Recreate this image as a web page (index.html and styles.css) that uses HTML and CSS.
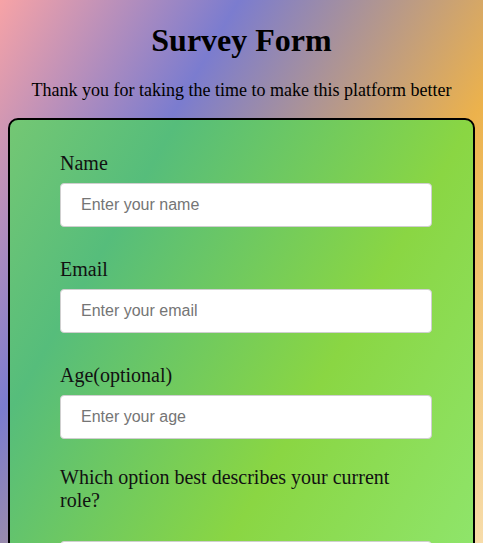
FILE: index.html
```html
<!DOCTYPE html>
<html lang="en">
<head>
<meta charset="utf-8">
<title>Survey Form</title>
<link rel="stylesheet" href="styles.css">
</head>
<body>
  <header class="header">
    <h1 class="title">Survey Form</h1>
    <p class="subtitle">Thank you for taking the time to make this platform better</p>
  </header>
  <form class="card">
    <div class="field">
      <label class="label" for="name">Name</label>
      <input class="input" id="name" type="text" placeholder="Enter your name">
    </div>
    <div class="field">
      <label class="label" for="email">Email</label>
      <input class="input" id="email" type="email" placeholder="Enter your email">
    </div>
    <div class="field">
      <label class="label" for="age">Age(optional)</label>
      <input class="input" id="age" type="number" placeholder="Enter your age">
    </div>
    <div class="field field-select">
      <label class="label" for="role">Which option best describes your current role?</label>
      <select class="input select" id="role">
        <option>Select current role</option>
        <option>Student</option>
        <option>Full Time Job</option>
        <option>Full Time Learner</option>
        <option>Prefer not to say</option>
        <option>Other</option>
      </select>
    </div>
    <div class="field">
      <p class="label">Would you recommend freeCodeCamp to a friend?</p>
      <label class="choice"><input type="radio" name="rec"> Definitely</label>
      <label class="choice"><input type="radio" name="rec"> Maybe</label>
      <label class="choice"><input type="radio" name="rec"> Not sure</label>
    </div>
    <div class="field">
      <label class="label" for="comments">Any comments or suggestions?</label>
      <textarea class="input textarea" id="comments" placeholder="Enter your comment here..."></textarea>
    </div>
    <div class="field">
      <button class="submit" type="submit">Submit</button>
    </div>
  </form>
</body>
</html>
```

FILE: styles.css
```css
html {
  margin: 0;
}

body {
  margin: 8px;
  font-family: "Liberation Serif", "Times New Roman", serif;
  color: #000;
  background: linear-gradient(120deg, #f7a3a6 0%, #7b7ccf 30%, #ecb24c 68%, #f7dcaa 100%) fixed;
  min-height: 100vh;
}

.header {
  text-align: center;
}

.title {
  font-size: 32px;
  font-weight: bold;
  margin: 13.5px 0 21.44px;
}

.subtitle {
  font-size: 18px;
  margin: 18px 0 17px;
}

.card {
  border: 2px solid #000;
  border-radius: 10px;
  padding: 32px 40px 40px 50px;
  background: linear-gradient(120deg, #82cc70 0%, #56bd7b 31%, #8ad643 68%, #8fe56c 100%) fixed;
}

.field {
  margin-bottom: 31px;
}

.label {
  display: block;
  font-size: 20px;
  margin: 0 0 8px;
  color: #111;
}

.field-select {
  margin-top: -4px;
}

.input {
  display: block;
  box-sizing: border-box;
  width: 372px;
  height: 44px;
  padding: 0 20px;
  border: 1px solid #cfcfcf;
  border-radius: 4px;
  background: #fff;
  font-family: "Liberation Sans", Arial, sans-serif;
  font-size: 16px;
  color: #222;
}

.input::placeholder {
  color: #757575;
}

.select {
  margin-top: 29px;
}

.textarea {
  height: 120px;
  padding-top: 10px;
  resize: vertical;
}

.choice {
  display: block;
  font-size: 18px;
  margin: 6px 0;
}

.submit {
  display: block;
  width: 372px;
  height: 44px;
  border: none;
  border-radius: 4px;
  background: #3b3b4f;
  color: #fff;
  font-size: 18px;
  font-family: "Liberation Sans", Arial, sans-serif;
}
```
